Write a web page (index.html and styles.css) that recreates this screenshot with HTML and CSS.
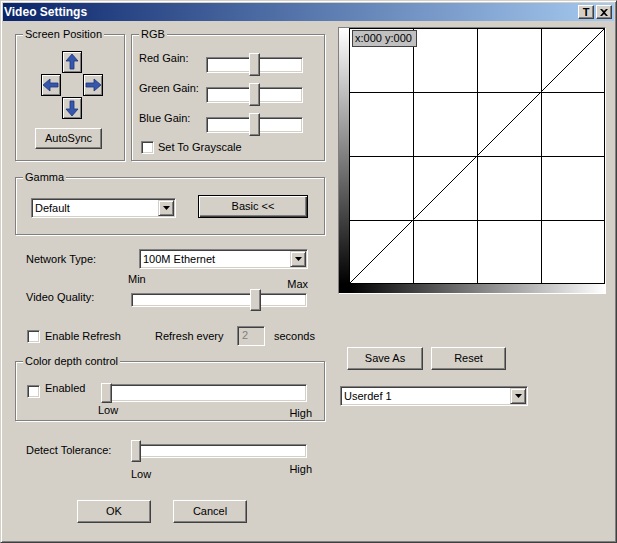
FILE: index.html
```html
<!DOCTYPE html>
<html lang="en">
<head>
<meta charset="utf-8">
<title>Video Settings</title>
<link rel="stylesheet" href="styles.css">
</head>
<body>
<div class="window">
  <div class="titlebar">
    <span class="title">Video Settings</span>
    <div class="title-buttons">
      <span class="tbtn">T</span>
      <span class="tbtn"><svg width="8" height="7" viewBox="0 0 8 7"><path d="M0 0h2l2 2 2-2h2L5 3.5 8 7H6L4 5 2 7H0l3-3.5z" fill="#000"/></svg></span>
    </div>
  </div>
  <div class="content">
    <div class="left">
      <div class="top-row">
        <div class="group g-pos">
          <div class="legend">Screen Position</div>
          <div class="arrows">
            <span class="arrow-btn a-up"><svg width="18" height="20" viewBox="0 0 18 20"><path d="M9 2L15 9H11V17H7V9H3Z" fill="#3658ac" stroke="#1f3578" stroke-width="0.8"/></svg></span>
            <span class="arrow-btn a-left"><svg width="18" height="20" viewBox="0 0 18 20"><path d="M1 10L8 4V8H16V12H8V16Z" fill="#3658ac" stroke="#1f3578" stroke-width="0.8"/></svg></span>
            <span class="arrow-btn a-right"><svg width="18" height="20" viewBox="0 0 18 20"><path d="M17 10L10 4V8H2V12H10V16Z" fill="#3658ac" stroke="#1f3578" stroke-width="0.8"/></svg></span>
            <span class="arrow-btn a-down"><svg width="18" height="20" viewBox="0 0 18 20"><path d="M9 18L15 11H11V3H7V11H3Z" fill="#3658ac" stroke="#1f3578" stroke-width="0.8"/></svg></span>
          </div>
          <button class="btn autosync">AutoSync</button>
        </div>
        <div class="group g-rgb">
          <div class="legend">RGB</div>
          <div class="gain-row first">
            <span class="gain-label">Red Gain:</span>
            <div class="slider s-gain"><div class="track"></div><div class="thumb" style="left:43px"></div></div>
          </div>
          <div class="gain-row">
            <span class="gain-label">Green Gain:</span>
            <div class="slider s-gain"><div class="track"></div><div class="thumb" style="left:43px"></div></div>
          </div>
          <div class="gain-row">
            <span class="gain-label">Blue Gain:</span>
            <div class="slider s-gain"><div class="track"></div><div class="thumb" style="left:43px"></div></div>
          </div>
          <div class="check-row">
            <span class="check"></span><span>Set To Grayscale</span>
          </div>
        </div>
      </div>

      <div class="group g-gamma">
        <div class="legend">Gamma</div>
        <div class="gamma-row">
          <div class="combo c-gamma"><span class="combo-text">Default</span><span class="combo-btn"><svg width="7" height="4" viewBox="0 0 7 4"><path d="M0 0H7L3.5 4Z" fill="#000"/></svg></span></div>
          <button class="btn btn-default btn-basic">Basic &lt;&lt;</button>
        </div>
      </div>

      <div class="net-row">
        <span class="net-label">Network Type:</span>
        <div class="combo c-net"><span class="combo-text">100M Ethernet</span><span class="combo-btn"><svg width="7" height="4" viewBox="0 0 7 4"><path d="M0 0H7L3.5 4Z" fill="#000"/></svg></span></div>
      </div>

      <div class="quality">
        <span class="q-label">Video Quality:</span>
        <div class="q-right">
          <div class="minmax"><span>Min</span><span class="max">Max</span></div>
          <div class="slider s-quality"><div class="track"></div><div class="thumb" style="left:119px"></div></div>
        </div>
      </div>

      <div class="refresh-row">
        <div class="refresh-check"><span class="check"></span><span>Enable Refresh</span></div>
        <span class="refresh-every">Refresh every</span>
        <div class="num">2</div>
        <span class="seconds">seconds</span>
      </div>

      <div class="group g-depth">
        <div class="legend">Color depth control</div>
        <div class="depth-row">
          <div class="depth-check"><span class="check"></span><span class="depth-text">Enabled</span></div>
          <div class="depth-right">
            <div class="slider s-depth"><div class="track"></div><div class="thumb" style="left:0px"></div></div>
            <div class="lowhigh lh-depth"><span>Low</span><span class="high">High</span></div>
          </div>
        </div>
      </div>

      <div class="detect">
        <span class="d-label">Detect Tolerance:</span>
        <div class="d-right">
          <div class="slider s-detect"><div class="track"></div><div class="thumb" style="left:0px"></div></div>
          <div class="lowhigh lh-detect"><span class="low">Low</span><span class="high">High</span></div>
        </div>
      </div>

      <div class="bottom-buttons">
        <button class="btn btn-ok">OK</button>
        <button class="btn btn-cancel">Cancel</button>
      </div>
    </div>

    <div class="right">
      <div class="graph">
        <div class="vstrip"></div>
        <div class="plot">
          <svg width="256" height="256" viewBox="0 0 256 256">
            <rect width="256" height="256" fill="#fff"/>
            <g stroke="#000" stroke-width="1" fill="none">
              <path d="M0.5 0V256M64.5 0V256M128.5 0V256M192.5 0V256M255.5 0V256"/>
              <path d="M0 0.5H256M0 64.5H256M0 128.5H256M0 192.5H256M0 255.5H256"/>
              <path d="M0.5 255.5L255.5 0.5"/>
            </g>
          </svg>
          <div class="coord">x:000 y:000</div>
        </div>
        <div class="corner"></div>
        <div class="hstrip"></div>
      </div>
      <div class="preset-buttons">
        <button class="btn btn-save">Save As</button>
        <button class="btn btn-reset">Reset</button>
      </div>
      <div class="combo c-user"><span class="combo-text">Userdef 1</span><span class="combo-btn"><svg width="7" height="4" viewBox="0 0 7 4"><path d="M0 0H7L3.5 4Z" fill="#000"/></svg></span></div>
    </div>
  </div>
</div>
</body>
</html>
```

FILE: styles.css
```css
* { box-sizing: border-box; }
html, body { margin: 0; padding: 0; }
body {
  font-family: "Liberation Sans", Arial, sans-serif;
  font-size: 11px;
  line-height: 13px;
  color: #000;
  background: #d4d0c8;
}

.window {
  width: 617px;
  height: 543px;
  border: 1px solid;
  border-color: #d4d0c8 #404040 #404040 #d4d0c8;
  box-shadow: inset 1px 1px #fff, inset -1px -1px #808080;
  padding: 2px;
  background: #d4d0c8;
  overflow: hidden;
}

.titlebar {
  height: 18px;
  display: flex;
  align-items: center;
  justify-content: space-between;
  background: linear-gradient(to right, #0a246a, #a6caf0);
  padding-left: 1px;
}
.title { color: #fff; font-weight: bold; font-size: 12px; line-height: 18px; }
.title-buttons { display: flex; gap: 2px; margin-right: 2px; }
.tbtn {
  width: 16px;
  height: 14px;
  display: flex;
  align-items: center;
  justify-content: center;
  background: #d4d0c8;
  border: 1px solid;
  border-color: #fff #404040 #404040 #fff;
  box-shadow: inset -1px -1px #808080;
  font-weight: bold;
  font-size: 11px;
  line-height: 12px;
}

.content { display: flex; gap: 12px; padding: 6px 0 0 12px; }
.left { width: 311px; display: flex; flex-direction: column; align-items: flex-start; }
.right { width: 269px; display: flex; flex-direction: column; align-items: flex-start; }

/* group boxes */
.group {
  border: 1px solid #808080;
  box-shadow: inset 1px 1px #fff, 1px 1px #fff;
}
.legend {
  width: max-content;
  height: 13px;
  margin: -7px 0 0 7px;
  padding: 0 2px;
  background: #d4d0c8;
}

.top-row { display: flex; gap: 6px; margin-top: 7px; }
.g-pos { width: 110px; height: 127px; }
.g-rgb { width: 194px; height: 127px; }

.arrows {
  display: grid;
  grid-template-columns: repeat(3, 20px);
  grid-template-rows: repeat(3, 22px);
  gap: 1px;
  grid-template-areas: ". up ." "left . right" ". down .";
  margin: 10px 0 0 25px;
}
.a-up { grid-area: up; }
.a-left { grid-area: left; }
.a-right { grid-area: right; }
.a-down { grid-area: down; }
.arrow-btn {
  border: 1px solid #000;
  background: #d4d0c8;
  box-shadow: inset 1px 1px #fff, inset -1px -1px #808080;
  display: flex;
  align-items: center;
  justify-content: center;
}

/* buttons */
.btn {
  font: inherit;
  color: #000;
  padding: 0;
  background: #d4d0c8;
  border: 1px solid;
  border-color: #fff #404040 #404040 #fff;
  box-shadow: inset -1px -1px #808080;
  height: 23px;
  display: flex;
  align-items: center;
  justify-content: center;
}
.btn-default {
  border: 1px solid #000;
  box-shadow: inset 1px 1px #fff, inset -1px -1px #404040, inset -2px -2px #808080;
}
.autosync { width: 67px; height: 21px; margin: 9px 0 0 19px; }
.btn-basic { width: 110px; }
.btn-ok, .btn-cancel { width: 74px; }
.btn-save { width: 76px; }
.btn-reset { width: 75px; }

/* sliders */
.slider { position: relative; display: flow-root; }
.track {
  background: #fff;
  border: 1px solid;
  border-color: #808080 #fff #fff #808080;
  box-shadow: inset 1px 1px #404040, inset -1px -1px #d4d0c8;
}
.thumb {
  position: absolute;
  top: 0;
  background: #d4d0c8;
  border: 1px solid;
  border-color: #fff #404040 #404040 #fff;
  box-shadow: inset -1px -1px #808080;
}

.gain-row { display: flex; align-items: flex-start; height: 23px; padding-left: 7px; margin-top: 7px; }
.gain-row.first { margin-top: 12px; }
.gain-label { width: 67px; margin-top: -1px; }
.s-gain { width: 97px; height: 23px; }
.s-gain .track { margin-top: 4px; height: 16px; }
.s-gain .thumb { width: 11px; height: 23px; }

.check {
  display: block;
  width: 13px;
  height: 13px;
  background: #fff;
  border: 1px solid;
  border-color: #808080 #fff #fff #808080;
  box-shadow: inset 1px 1px #404040, inset -1px -1px #d4d0c8;
  flex: none;
}
.check-row { display: flex; align-items: center; gap: 4px; margin: 5px 0 0 9px; }

/* combo boxes */
.combo {
  display: flex;
  align-items: center;
  height: 20px;
  padding: 1px;
  background: #fff;
  border: 1px solid;
  border-color: #808080 #fff #fff #808080;
  box-shadow: inset 1px 1px #404040, inset -1px -1px #d4d0c8;
}
.combo-text { flex: 1; padding-left: 2px; }
.combo-btn {
  width: 16px;
  height: 16px;
  display: flex;
  align-items: center;
  justify-content: center;
  background: #d4d0c8;
  border: 1px solid;
  border-color: #d4d0c8 #404040 #404040 #d4d0c8;
  box-shadow: inset 1px 1px #fff, inset -1px -1px #808080;
}

.g-gamma { width: 310px; height: 58px; margin-top: 16px; }
.gamma-row { display: flex; align-items: flex-start; gap: 22px; margin: 11px 0 0 15px; }
.c-gamma { width: 145px; margin-top: 3px; }

.net-row { display: flex; align-items: center; height: 20px; margin-top: 14px; padding-left: 11px; }
.net-label { width: 113px; }
.c-net { width: 169px; }

.quality { display: flex; margin-top: 4px; }
.q-label { width: 116px; padding-left: 11px; margin-top: 18px; }
.q-right { width: 176px; }
.minmax { display: flex; justify-content: space-between; height: 16px; margin: 0 -1px 0 -3px; }
.max { margin-top: 5px; }
.s-quality { width: 176px; height: 22px; }
.s-quality .track { margin-top: 4px; height: 14px; }
.s-quality .thumb { width: 11px; height: 22px; }

.refresh-row { display: flex; align-items: center; height: 20px; margin-top: 15px; padding-left: 12px; }
.refresh-check { display: flex; align-items: center; gap: 5px; width: 128px; }
.refresh-every { width: 82px; }
.num {
  width: 28px;
  height: 20px;
  padding-left: 4px;
  line-height: 16px;
  color: #808080;
  background: #d4d0c8;
  border: 1px solid;
  border-color: #808080 #fff #fff #808080;
  box-shadow: inset 1px 1px #404040, inset -1px -1px #d4d0c8;
}
.seconds { margin-left: 9px; }

.g-depth { width: 310px; height: 60px; margin-top: 15px; }
.depth-row { display: flex; margin-top: 15px; }
.depth-check { display: flex; align-items: flex-start; gap: 5px; width: 85px; padding-left: 11px; }
.depth-check .check { margin-top: 2px; }
.depth-text { margin-top: -1px; }
.depth-right { width: 206px; }
.s-depth { width: 206px; height: 20px; }
.s-depth .track { margin-top: 1px; height: 18px; }
.s-depth .thumb { width: 11px; height: 20px; }
.lowhigh { display: flex; justify-content: space-between; }
.lh-depth { margin: 1px -5px 0 -3px; }
.lh-depth .high { margin-top: 3px; }

.detect { display: flex; margin-top: 19px; }
.d-label { width: 116px; padding-left: 11px; margin-top: 4px; }
.d-right { width: 176px; }
.s-detect { width: 176px; height: 22px; }
.s-detect .track { margin-top: 4px; height: 14px; }
.s-detect .thumb { width: 10px; height: 22px; }
.lh-detect { margin-right: -5px; }
.lh-detect .low { margin-top: 6px; }
.lh-detect .high { margin-top: 1px; }

.bottom-buttons { display: flex; gap: 22px; margin-top: 19px; padding-left: 62px; }

/* graph */
.graph {
  display: grid;
  grid-template-columns: 10px 256px;
  grid-template-rows: 256px 9px;
  border: 1px solid;
  border-color: #808080 #fff #fff #808080;
}
.vstrip { background: linear-gradient(to bottom, #fff, #000); }
.plot { position: relative; }
.plot svg { display: block; }
.corner { background: #000; }
.hstrip { background: linear-gradient(to right, #000, #fff); }
.coord {
  position: absolute;
  left: 3px;
  top: 2px;
  width: 65px;
  height: 17px;
  padding-left: 2px;
  line-height: 15px;
  background: #c0c0c0;
  border: 1px solid #404040;
}

.preset-buttons { display: flex; gap: 8px; margin: 53px 0 0 9px; }
.c-user { width: 188px; margin: 16px 0 0 2px; }
```
